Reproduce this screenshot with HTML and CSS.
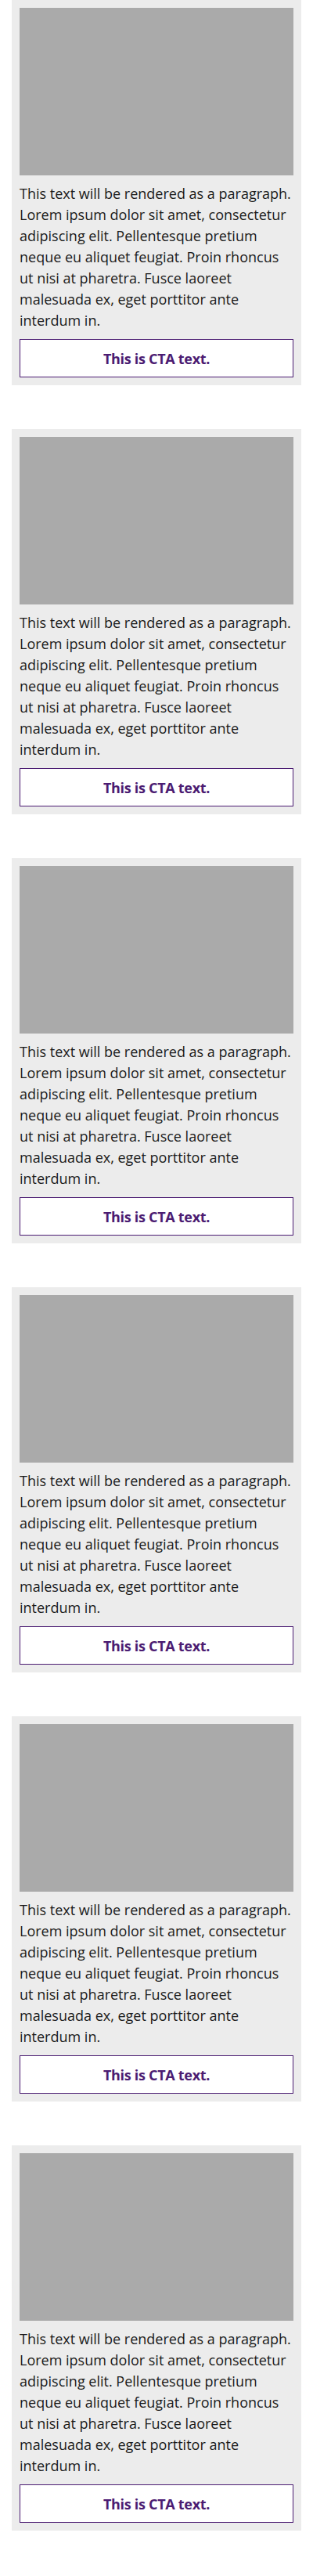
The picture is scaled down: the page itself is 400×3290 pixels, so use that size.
FILE: index.html
```html
<!DOCTYPE html>
<html lang="en">
<head>
<meta charset="utf-8">
<title>Cards</title>
<link rel="stylesheet" href="styles.css">
</head>
<body>
<main class="list">
  <article class="card">
    <div class="card-media"></div>
    <p class="card-text">This text will be rendered as a paragraph. Lorem ipsum dolor sit amet, consectetur adipiscing elit. Pellentesque pretium neque eu aliquet feugiat. Proin rhoncus ut nisi at pharetra. Fusce laoreet malesuada ex, eget porttitor ante interdum in.</p>
    <a class="card-cta" href="#">This is CTA text.</a>
  </article>
  <article class="card">
    <div class="card-media"></div>
    <p class="card-text">This text will be rendered as a paragraph. Lorem ipsum dolor sit amet, consectetur adipiscing elit. Pellentesque pretium neque eu aliquet feugiat. Proin rhoncus ut nisi at pharetra. Fusce laoreet malesuada ex, eget porttitor ante interdum in.</p>
    <a class="card-cta" href="#">This is CTA text.</a>
  </article>
  <article class="card">
    <div class="card-media"></div>
    <p class="card-text">This text will be rendered as a paragraph. Lorem ipsum dolor sit amet, consectetur adipiscing elit. Pellentesque pretium neque eu aliquet feugiat. Proin rhoncus ut nisi at pharetra. Fusce laoreet malesuada ex, eget porttitor ante interdum in.</p>
    <a class="card-cta" href="#">This is CTA text.</a>
  </article>
  <article class="card">
    <div class="card-media"></div>
    <p class="card-text">This text will be rendered as a paragraph. Lorem ipsum dolor sit amet, consectetur adipiscing elit. Pellentesque pretium neque eu aliquet feugiat. Proin rhoncus ut nisi at pharetra. Fusce laoreet malesuada ex, eget porttitor ante interdum in.</p>
    <a class="card-cta" href="#">This is CTA text.</a>
  </article>
  <article class="card">
    <div class="card-media"></div>
    <p class="card-text">This text will be rendered as a paragraph. Lorem ipsum dolor sit amet, consectetur adipiscing elit. Pellentesque pretium neque eu aliquet feugiat. Proin rhoncus ut nisi at pharetra. Fusce laoreet malesuada ex, eget porttitor ante interdum in.</p>
    <a class="card-cta" href="#">This is CTA text.</a>
  </article>
  <article class="card">
    <div class="card-media"></div>
    <p class="card-text">This text will be rendered as a paragraph. Lorem ipsum dolor sit amet, consectetur adipiscing elit. Pellentesque pretium neque eu aliquet feugiat. Proin rhoncus ut nisi at pharetra. Fusce laoreet malesuada ex, eget porttitor ante interdum in.</p>
    <a class="card-cta" href="#">This is CTA text.</a>
  </article>
</main>
</body>
</html>
```

FILE: styles.css
```css
html, body {
  margin: 0;
  padding: 0;
  background: #ffffff;
}

body {
  font-family: "Open Sans", "Noto Sans", sans-serif;
  color: #1a1a1a;
}

.list {
  display: flex;
  flex-direction: column;
  gap: 56px;
  padding: 0 15px;
}

.card {
  display: flex;
  flex-direction: column;
  background: #ececec;
  padding: 10px;
}

.card-media {
  height: 214px;
  background: #aaaaaa;
}

.card-text {
  margin: 10px 0;
  font-size: 18px;
  line-height: 27px;
  letter-spacing: 0;
}

.card-cta {
  display: flex;
  align-items: center;
  justify-content: center;
  height: 47px;
  background: #ffffff;
  border: 1px solid #4b1c72;
  color: #4b1c72;
  font-weight: 700;
  font-size: 18px;
  letter-spacing: -0.3px;
  text-decoration: none;
}
```
